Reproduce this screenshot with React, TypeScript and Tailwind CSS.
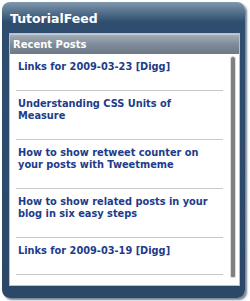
import React from "react";

const posts = [
  ["Links for 2009-03-23 [Digg]"],
  ["Understanding CSS Units of", "Measure"],
  ["How to show retweet counter on", "your posts with Tweetmeme"],
  ["How to show related posts in your", "blog in six easy steps"],
  ["Links for 2009-03-19 [Digg]"],
];

export default function App() {
  return (
    <div
      className="w-[250px] h-[301px] bg-white pt-[2px] pl-[2px]"
      style={{ fontFamily: '"DejaVu Sans", Verdana, sans-serif' }}
    >
      <div className="w-[243px] h-[296px] rounded-[8px] bg-[linear-gradient(to_bottom,#8198ad_0px,#56718d_10px,#2f4d6e_20px,#2b4869_100%)] shadow-[2px_2px_2px_rgba(30,50,70,0.6)] flex flex-col">
        <div className="h-[31px] flex items-center pl-[8px] pt-[4px] text-white font-bold text-[12.5px]">
          TutorialFeed
        </div>
        <div className="ml-[7px] w-[231px] border border-[#b8c0c8] flex flex-col">
          <div className="h-[20px] bg-[linear-gradient(to_bottom,#a3adb8,#7f8b98_50%,#6d7986)] border-t border-[#c4cbd2] flex items-center pl-[3px] text-white font-bold text-[10px]">
            Recent Posts
          </div>
          <div className="relative bg-white h-[231px]">
            {posts.map((lines, i) => (
              <div
                key={i}
                className="ml-[6px] mr-[16px] pt-[7px] pb-[17px] pl-[2px] border-b border-[#c8c8c8] text-[#1d3b8b] font-bold text-[9.8px] leading-[12px]"
              >
                {lines.map((l, j) => (
                  <div key={j}>{l}</div>
                ))}
              </div>
            ))}
            <div className="absolute right-[3px] top-[2px] bottom-[7px] w-[6px] rounded-t-[3px] rounded-b-[2px] bg-[#808080] border border-[#dcdcdc]" />
          </div>
        </div>
      </div>
    </div>
  );
}
